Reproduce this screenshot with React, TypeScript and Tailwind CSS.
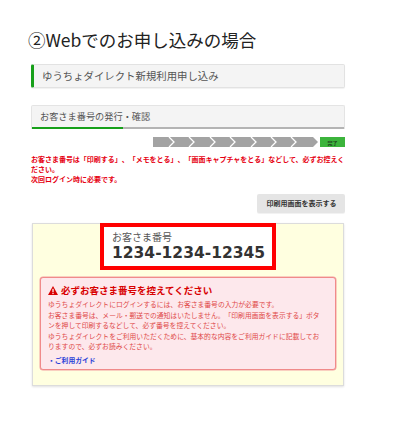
export default function App() {
  const segments = [20, 40, 61, 81, 102, 122, 142];

  return (
    <div className="w-[416px] h-[437px] bg-white font-['Noto_Sans_CJK_JP',sans-serif] text-[#333] [text-spacing-trim:space-all]">
      <div className="pl-[31px] pt-[28px] w-[345px]">
        {/* Title */}
        <h1 className="-ml-[3px] text-[17.5px] leading-[24px] font-normal text-[#222] whitespace-nowrap">
          ②Webでのお申し込みの場合
        </h1>

        {/* Step header */}
        <div className="mt-[12px] h-[24px] flex items-center bg-[#f4f4f4] border border-[#e2e2e2] border-l-[3px] border-l-[#17a01a] rounded-[2px] shadow-[0_1px_1px_rgba(0,0,0,0.06)]">
          <span className="pl-[8px] text-[10.4px] leading-none text-[#555] whitespace-nowrap">
            ゆうちょダイレクト新規利用申し込み
          </span>
        </div>

        {/* Sub header with progress underline */}
        <div className="mt-[17px] bg-[#f4f4f4] border border-b-0 border-[#e4e4e4] rounded-t-[2px]">
          <div className="h-[21px] flex items-center pl-[8px] text-[9.2px] leading-none text-[#555] whitespace-nowrap">
            お客さま番号の発行・確認
          </div>
          <div className="flex h-[2px]">
            <div className="w-[91px] bg-[#17a01a]" />
            <div className="flex-1 bg-[#b4b4b4]" />
          </div>
        </div>

        {/* Step indicator */}
        <div className="mt-[8px] flex justify-end">
          <div className="flex items-center h-[10px]">
            <svg width="165" height="10" viewBox="0 0 165 10">
              <polygon points="0,0 160,0 165,5 160,10 0,10" fill="#a3a3a3" />
              {segments.map((x) => (
                <polyline
                  key={x}
                  points={`${x - 4},0 ${x + 1},5 ${x - 4},10`}
                  fill="none"
                  stroke="#ffffff"
                  strokeWidth="1.3"
                />
              ))}
            </svg>
            <div className="ml-[2px] w-[25px] h-[10px] bg-[#3cb43c] flex items-center justify-center text-[5px] leading-none font-bold text-[#1f3d1f]">
              完了
            </div>
          </div>
        </div>

        {/* Notice */}
        <div className="mt-[7px] text-[7px] leading-[10px] font-bold text-[#e60012] whitespace-nowrap">
          <div className="w-[312px] tracking-[-1.2px] [text-align-last:justify]">
            お客さま番号は「印刷する」、「メモをとる」、「画面キャプチャをとる」などして、必ずお控えく
          </div>
          <div>ださい。</div>
          <div>次回ログイン時に必要です。</div>
        </div>

        <div className="mt-[10px] flex justify-end">
          <button className="w-[88px] h-[19px] bg-[#e5e5e5] rounded-[2px] flex items-center justify-center shadow-[0_1px_0_rgba(0,0,0,0.05)]">
            <span className="w-[69px] text-[7px] leading-none font-bold text-[#333] whitespace-nowrap tracking-[-1px] [text-align-last:justify]">
              印刷用画面を表示する
            </span>
          </button>
        </div>

        {/* Customer number panel */}
        <div className="mt-[10px] mx-px bg-[#ffffe0] border border-[#dcdcdc] shadow-[0_1px_2px_rgba(0,0,0,0.12)] pb-[15px]">
          <div className="flex justify-center">
            <div className="-mt-px w-[176px] h-[47px] border-4 border-[#ff0000] bg-white pl-[8px] pt-[3px]">
              <div className="text-[10px] leading-[13px] text-[#555]">お客さま番号</div>
              <div className="font-['DejaVu_Sans',sans-serif] font-bold text-[15.5px] leading-[20px] text-[#333] whitespace-nowrap">
                1234-1234-12345
              </div>
            </div>
          </div>

          <div className="mt-[7px] mx-[7px] bg-[#fde8ec] border border-[#f08a8a] rounded-[3px] px-[7px] pt-[5px] pb-[4px] shadow-[0_0_0_0.5px_#f4a0a0]">
            <div className="flex items-center h-[14px] text-[9.5px] font-bold text-[#d80000] whitespace-nowrap">
              <svg width="10" height="9" viewBox="0 0 10 9" className="mr-[3px]">
                <polygon points="5,0 10,9 0,9" fill="#d80000" />
                <rect x="4.4" y="2.8" width="1.2" height="3.4" fill="#fff" />
                <rect x="4.4" y="6.9" width="1.2" height="1.2" fill="#fff" />
              </svg>
              必ずお客さま番号を控えてください
            </div>
            <div className="mt-[2px] text-[6.8px] leading-[10px] text-[#e04848] whitespace-nowrap">
              <p>ゆうちょダイレクトにログインするには、お客さま番号の入力が必要です。</p>
              <p className="mt-px">
                お客さま番号は、メール・郵送での通知はいたしません。「印刷用画面を表示する」ボタ
                <br />
                ンを押して印刷するなどして、必ず番号を控えてください。
              </p>
              <p className="mt-px">
                ゆうちょダイレクトをご利用いただくために、基本的な内容をご利用ガイドに記載してお
                <br />
                りますので、必ずお読みください。
              </p>
              <p className="mt-[4px] font-bold text-[#2a3fd8]">・ご利用ガイド</p>
            </div>
          </div>
        </div>
      </div>
    </div>
  );
}
